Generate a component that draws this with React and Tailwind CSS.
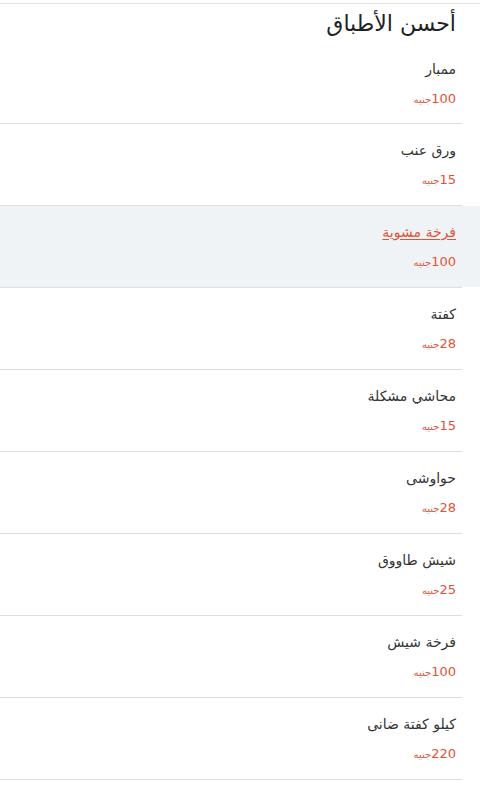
import React from "react";

const dishes = [
  { name: "ممبار", price: 100 },
  { name: "ورق عنب", price: 15 },
  { name: "فرخة مشوية", price: 100, active: true },
  { name: "كفتة", price: 28 },
  { name: "محاشي مشكلة", price: 15 },
  { name: "حواوشى", price: 28 },
  { name: "شيش طاووق", price: 25 },
  { name: "فرخة شيش", price: 100 },
  { name: "كيلو كفتة ضانى", price: 220 },
];

const App = () => {
  return (
    <div
      dir="rtl"
      className="min-h-screen bg-white"
      style={{ fontFamily: '"DejaVu Sans", "Noto Sans", sans-serif' }}
    >
      <div className="h-[3px]" />
      <div className="h-px bg-[#e2e2e2]" />

      {/* Title */}
      <h1 className="pr-[24px] pt-[2px] h-[40px] text-[22px] leading-[36px] text-[#222]">
        أحسن الأطباق
      </h1>

      {/* Dishes */}
      <ul>
        {dishes.map((dish, index) => (
          <li key={index}>
            <div
              className={
                (dish.active ? "bg-[#f0f3f6] " : "") +
                (index === 0 ? "h-[79px] " : "h-[81px] ") +
                "pr-[24px] flex flex-col justify-center"
              }
            >
              <p
                className={
                  dish.active
                    ? "text-[14px] leading-[20px] text-[#e0533a] underline underline-offset-2"
                    : "text-[14px] leading-[20px] text-[#333]"
                }
              >
                {dish.name}
              </p>
              <p className="mt-[10px] leading-[18px] text-[#e0533a]">
                <span className="text-[13px]">{dish.price}</span>
                <span className="text-[10px]">جنيه</span>
              </p>
            </div>
            <div className="h-px bg-[#dedede] mr-[18px]" />
          </li>
        ))}
      </ul>
    </div>
  );
};

export default App;
